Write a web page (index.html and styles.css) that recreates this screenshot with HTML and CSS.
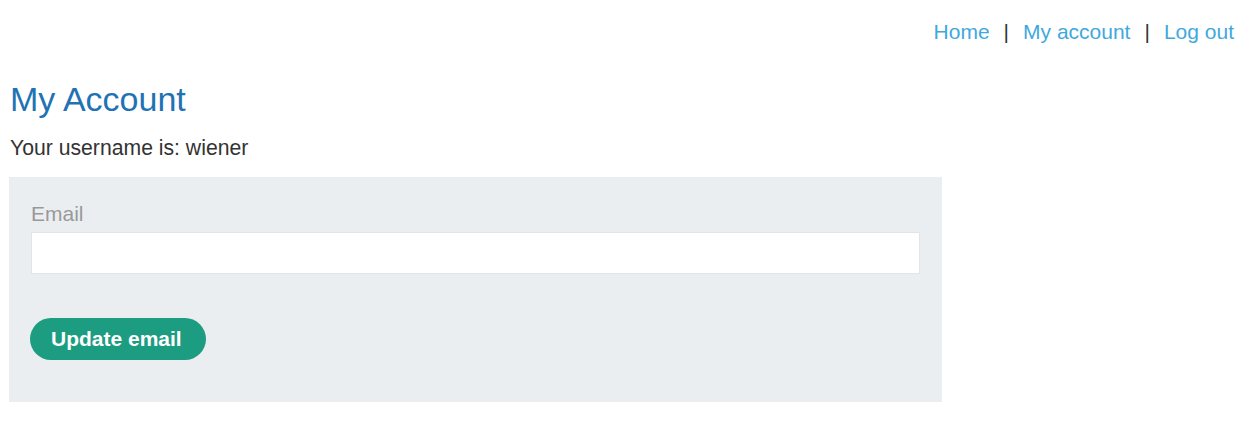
FILE: index.html
```html
<!DOCTYPE html>
<html lang="en">
<head>
    <meta charset="UTF-8">
    <title>My Account</title>
    <link rel="stylesheet" href="styles.css">
</head>
<body>

<header class="top-nav">
    <a href="#">Home</a>
    <span class="sep">|</span>
    <a href="#">My account</a>
    <span class="sep">|</span>
    <a href="#">Log out</a>
</header>

<div class="container">
    <h1>My Account</h1>
    <p class="username">Your username is: wiener</p>

    <form class="email-form">
        <label for="email">Email</label>
        <input type="email" id="email" name="email">
        <button type="submit" class="update-btn">Update email</button>
    </form>
</div>

</body>
</html>
```

FILE: styles.css
```css
body {
    font-family: "Liberation Sans", Arial, sans-serif;
    color: #333;
    margin: 0;
    background-color: #fff;
}
.top-nav {
    display: flex;
    justify-content: flex-end;
    align-items: center;
    gap: 14px;
    padding: 20px 11px 0 0;
    font-size: 21px;
    line-height: 24px;
}
.top-nav a {
    color: #3fa9dd;
    text-decoration: none;
}
.top-nav .sep {
    color: #333;
}
.container {
    padding: 0 9px;
}
h1 {
    font-size: 34px;
    font-weight: normal;
    color: #1f72b4;
    margin: 36px 0 0 1px;
    line-height: 39px;
}
.username {
    font-size: 21.2px;
    line-height: 24px;
    margin: 17px 0 17px 1px;
}
.email-form {
    width: 889px;
    background-color: #ebeef1;
    padding: 25px 22px 42px 22px;
    display: flex;
    flex-direction: column;
    align-items: flex-start;
}
.email-form label {
    font-size: 21px;
    line-height: 24px;
    color: #999;
    margin-bottom: 6px;
}
.email-form input {
    width: 100%;
    height: 42px;
    box-sizing: border-box;
    border: 1px solid #e2e5e8;
    background: #fff;
    font-size: 18px;
    padding: 0 10px;
    margin: 0;
}
.update-btn {
    margin: 44px 0 0 -1px;
    height: 42px;
    width: 176px;
    border: none;
    border-radius: 21px;
    background-color: #1c9c80;
    color: #fff;
    font-family: inherit;
    font-size: 21px;
    font-weight: bold;
    text-align: left;
    padding: 0 0 0 21px;
    cursor: pointer;
}
```
